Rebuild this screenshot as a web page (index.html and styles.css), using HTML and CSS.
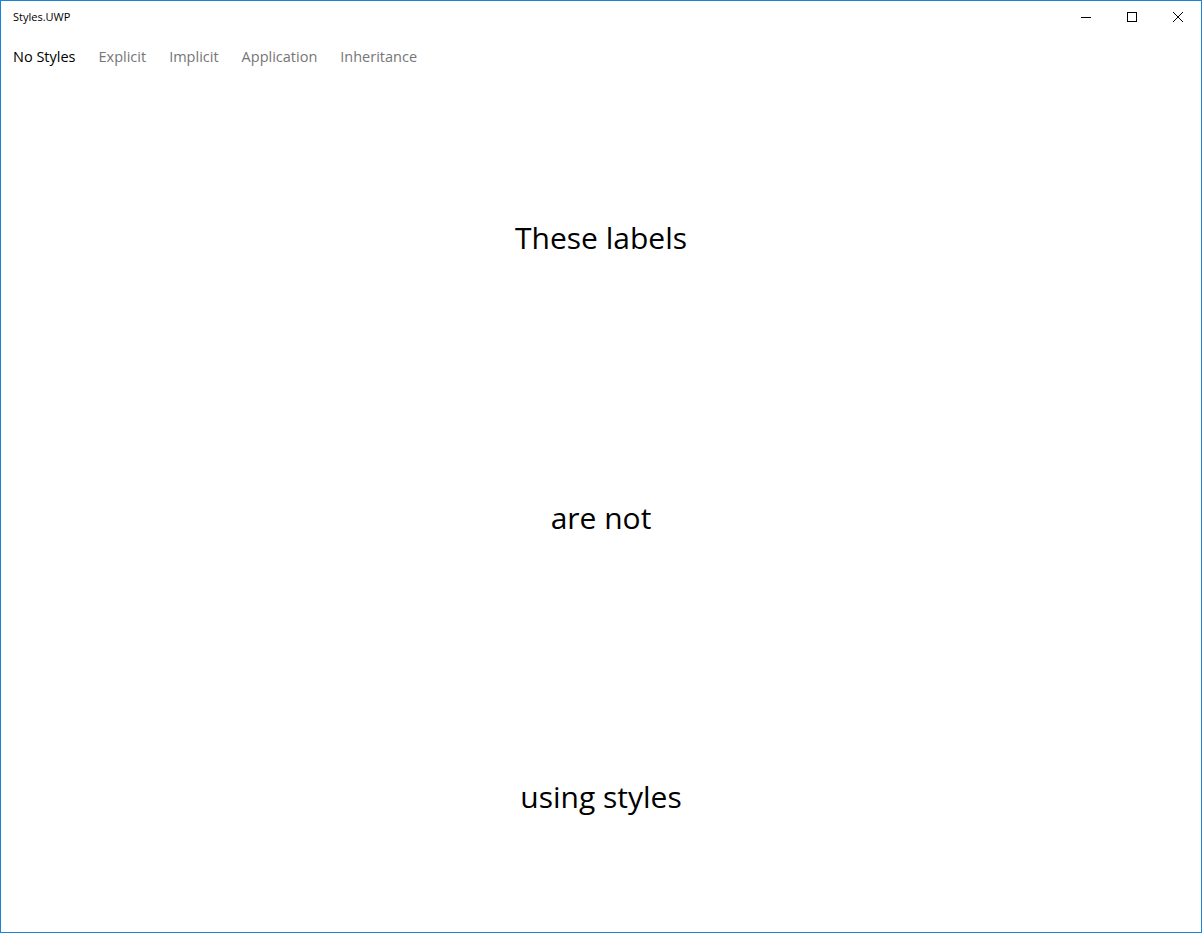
FILE: index.html
```html
<!DOCTYPE html>
<html>
<head>
<meta charset="utf-8">
<title>Styles.UWP</title>
<link rel="stylesheet" href="styles.css">
</head>
<body>
<div class="window">
  <header class="titlebar">
    <span class="title">Styles.UWP</span>
    <div class="caption-buttons">
      <span class="cbtn"><svg width="10" height="10" viewBox="0 0 10 10"><path d="M0 5.5H10" stroke="#000" stroke-width="1"/></svg></span>
      <span class="cbtn"><svg width="10" height="10" viewBox="0 0 10 10"><rect x="0.5" y="0.5" width="9" height="9" fill="none" stroke="#000" stroke-width="1"/></svg></span>
      <span class="cbtn"><svg width="10" height="10" viewBox="0 0 10 10"><path d="M0 0L10 10M10 0L0 10" stroke="#000" stroke-width="1"/></svg></span>
    </div>
  </header>
  <nav class="tabs">
    <span class="tab active">No Styles</span>
    <span class="tab">Explicit</span>
    <span class="tab">Implicit</span>
    <span class="tab">Application</span>
    <span class="tab">Inheritance</span>
  </nav>
  <main class="content">
    <div class="row"><span class="label">These labels</span></div>
    <div class="row"><span class="label">are not</span></div>
    <div class="row"><span class="label">using styles</span></div>
  </main>
</div>
</body>
</html>
```

FILE: styles.css
```css
html, body {
  margin: 0;
  padding: 0;
  background: #fff;
}
body {
  font-family: "Open Sans", "Noto Sans", "DejaVu Sans", sans-serif;
  color: #000;
}
.window {
  box-sizing: border-box;
  width: 1202px;
  height: 933px;
  border: 1px solid #1883d7;
  display: flex;
  flex-direction: column;
  overflow: hidden;
}
.titlebar {
  height: 31px;
  display: flex;
  align-items: center;
  justify-content: space-between;
  flex: none;
}
.title {
  font-size: 11px;
  padding-left: 12px;
  margin-top: -1px;
}
.caption-buttons {
  display: flex;
  height: 100%;
}
.cbtn {
  width: 46px;
  height: 100%;
  display: flex;
  align-items: center;
  justify-content: center;
}
.tabs {
  display: flex;
  gap: 23px;
  padding-left: 12px;
  height: 50px;
  align-items: center;
  margin-top: -1px;
  flex: none;
}
.tab {
  font-size: 14.5px;
  color: #767676;
}
.tab.active {
  color: #000;
}
.content {
  display: grid;
  grid-template-rows: repeat(3, 279.5px);
  padding-top: 17px;
}
.row {
  display: flex;
  align-items: center;
  justify-content: center;
}
.label {
  font-size: 30px;
}
```
